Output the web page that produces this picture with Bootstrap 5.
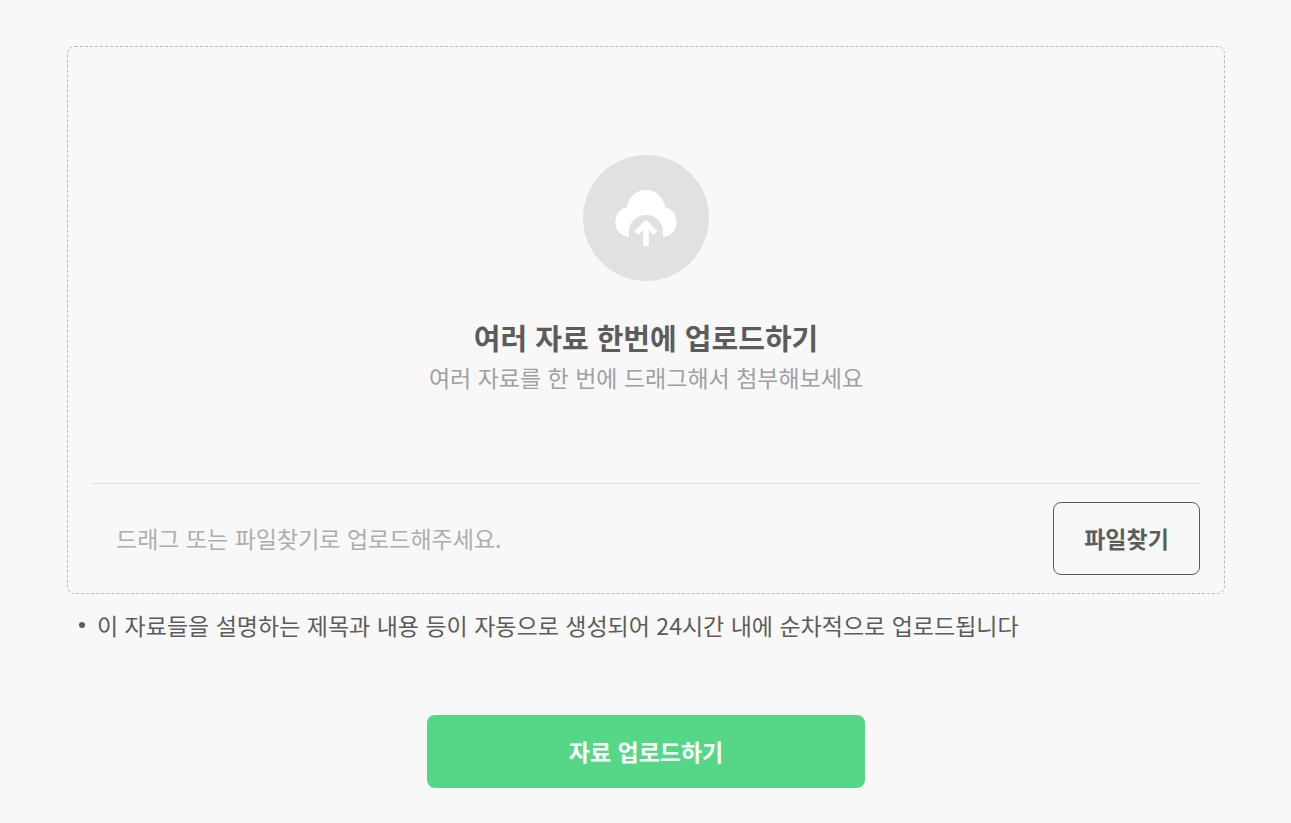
<!DOCTYPE html>
<html lang="ko">
<head>
<meta charset="utf-8">
<meta name="viewport" content="width=device-width, initial-scale=1">
<title>자료 업로드</title>
<link href="https://cdn.jsdelivr.net/npm/bootstrap@5.3.0/dist/css/bootstrap.min.css" rel="stylesheet">
<style>
body{background:#f8f8f8;color:#5c5c5c;font-family:"Noto Sans CJK KR",sans-serif;font-size:23px;line-height:36px}
.page{padding:46px 66px 35px 67px}
.dropzone{border:1px dashed #bbb;border-radius:8px;padding:0 24px 18px}
.drop-area{padding:108px 0 88px}
.drop-icon{width:126px;height:126px}
.drop-title{font-size:29px;line-height:44px;font-weight:700;margin:34px 0 0}
.drop-text{color:#a0a0a0}
.file-row{border-top:1px solid #ddd;padding-top:18px}
.file-name,.file-name:focus{border:0;background:none;box-shadow:none;outline:0;padding:0 24px;font-size:23px;color:#5c5c5c}
.file-name::placeholder{color:#adadad;opacity:1}
.btn-find,.btn-send{height:73px;font-size:23px;font-weight:700;border-radius:8px}
.btn-find{width:147px;border:1px solid #5c5c5c;color:#5c5c5c}
.btn-send,.btn-send:hover{width:438px;background:#56d788;color:#fff;border:0}
.notes{padding-left:12px;margin:13px 0 72px}
.notes li{gap:12px}
.notes li::before{content:"";width:6px;height:6px;border-radius:50%;background:#5c5c5c;flex:none}
</style>
</head>
<body>
<main class="page">
<form>
<section class="dropzone">
<div class="drop-area text-center">
<svg class="drop-icon" viewBox="0 0 126 126" aria-hidden="true">
<circle cx="63" cy="63" r="63" fill="#e1e1e1"/>
<path fill="#fff" d="M46 82C38.500 82 32.300 75.300 32.300 67.300C32.300 59.500 37.200 53.600 43.800 52.300C45.300 42.300 53 35 63 35S80.700 42.300 82.200 52.300C88.700 53.600 93.500 59.500 93.500 67.300C93.500 75.300 87.500 82 80 82V77C80 67.300 72.700 60 63 60S46 67.300 46 77Z"/>
<path fill="#fff" d="M63 64.700L74.500 76.300L70.700 80L65.800 75.200V91H60.200V75.200L55.300 80L51.500 76.300Z"/>
</svg>
<h1 class="drop-title">여러 자료 한번에 업로드하기</h1>
<p class="drop-text mb-0">여러 자료를 한 번에 드래그해서 첨부해보세요</p>
</div>
<div class="file-row d-flex align-items-center">
<input class="file-name form-control" type="text" readonly aria-label="첨부 파일" placeholder="드래그 또는 파일찾기로 업로드해주세요.">
<button class="btn btn-find flex-shrink-0" type="button">파일찾기</button>
</div>
</section>
<ul class="notes list-unstyled"><li class="d-flex align-items-center">이 자료들을 설명하는 제목과 내용 등이 자동으로 생성되어 24시간 내에 순차적으로 업로드됩니다</li></ul>
<div class="text-center"><button class="btn btn-send" type="submit">자료 업로드하기</button></div>
</form>
</main>
<script src="https://cdn.jsdelivr.net/npm/bootstrap@5.3.0/dist/js/bootstrap.bundle.min.js"></script>
</body>
</html>
